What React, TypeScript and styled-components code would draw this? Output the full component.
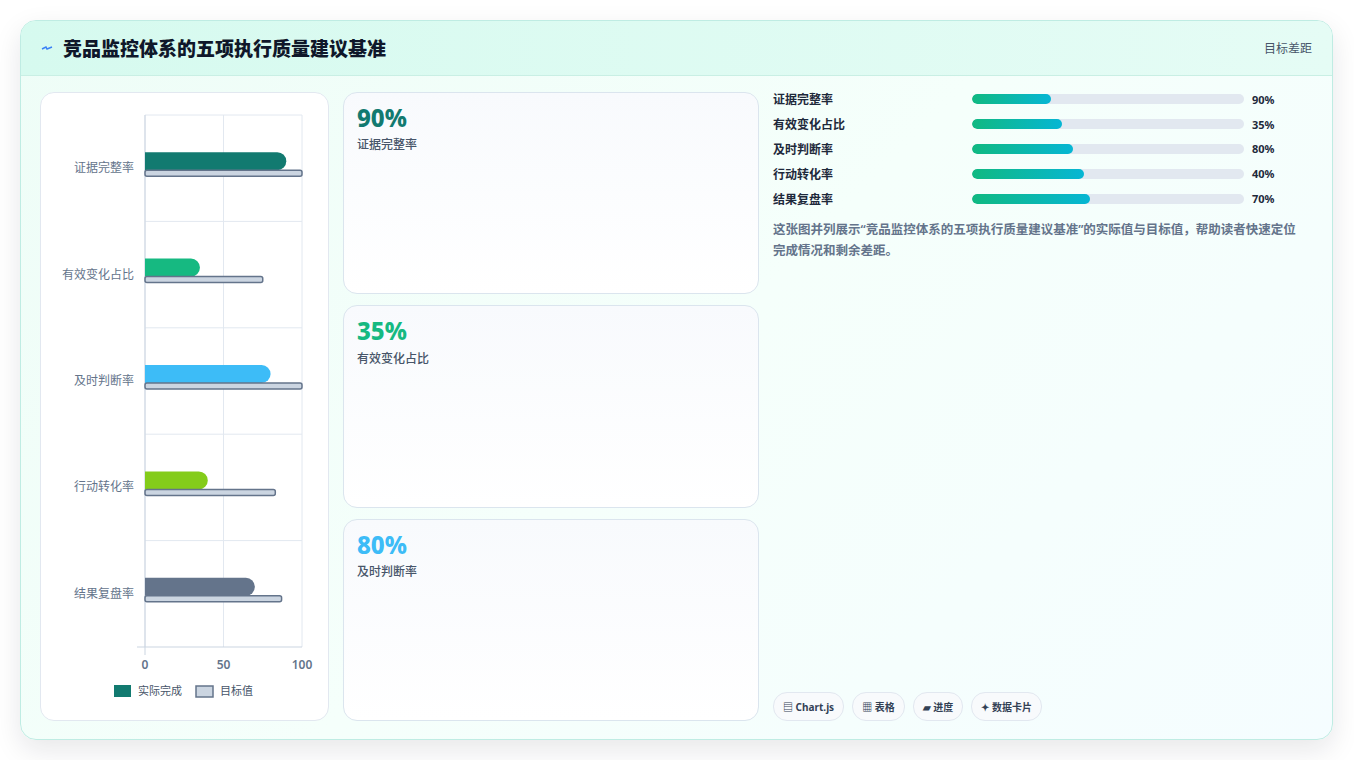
import styled, { createGlobalStyle } from "styled-components";

const Global = createGlobalStyle`
  html, body { margin: 0; padding: 0; background: #fff; }
  body { font-family: "Noto Sans", "Noto Sans CJK SC", sans-serif; }
`;

const data = [
  { name: "证据完整率", actual: 90, target: 100, color: "#127a70", fill: 79 },
  { name: "有效变化占比", actual: 35, target: 75, color: "#16b981", fill: 90 },
  { name: "及时判断率", actual: 80, target: 100, color: "#3dbcf7", fill: 101 },
  { name: "行动转化率", actual: 40, target: 83, color: "#84cc1a", fill: 112 },
  { name: "结果复盘率", actual: 70, target: 87, color: "#64748b", fill: 118 },
];

const Page = styled.div`
  padding: 20px 21px 20px 20px;
  height: 760px;
  box-sizing: border-box;
`;

const Card = styled.div`
  height: 720px;
  box-sizing: border-box;
  border: 1px solid #bfece3;
  border-radius: 16px;
  background: linear-gradient(135deg, #eefdf7 0%, #f5fffb 50%, #f5fdff 100%);
  box-shadow: 0 10px 28px rgba(15, 23, 42, 0.1);
  display: flex;
  flex-direction: column;
  overflow: hidden;
`;

const Header = styled.div`
  height: 55px;
  flex: none;
  box-sizing: border-box;
  display: flex;
  align-items: center;
  justify-content: space-between;
  padding: 0 20px 0 20px;
  background: linear-gradient(90deg, #d6faef, #e5fcf5);
  border-bottom: 1px solid #c9efe4;
`;

const Title = styled.h1`
  margin: 0;
  font-size: 19px;
  font-weight: 800;
  color: #0f172a;
  display: flex;
  align-items: center;
  gap: 10px;
`;

const HeaderNote = styled.span`
  font-size: 12px;
  color: #475569;
`;

const Body = styled.div`
  flex: 1;
  display: grid;
  grid-template-columns: 289px 416px 1fr;
  gap: 14px;
  padding: 16px 20px 18px 19px;
  min-height: 0;
`;

const Panel = styled.div`
  background: #fff;
  border: 1px solid #e2e8f0;
  border-radius: 14px;
  overflow: hidden;
`;

const Stats = styled.div`
  display: grid;
  grid-template-rows: repeat(3, 1fr);
  gap: 11px;
  min-height: 0;
`;

const StatCard = styled.div`
  border: 1px solid #dbe5ee;
  border-radius: 14px;
  background: linear-gradient(180deg, #f8fafd, #ffffff);
  padding: 12px 13px;
`;

const StatValue = styled.div<{ $color: string }>`
  font-size: 24px;
  font-weight: 800;
  color: ${(p) => p.$color};
  line-height: 1.1;
`;

const StatLabel = styled.div`
  font-size: 12px;
  color: #475569;
  margin-top: 4px;
  font-weight: 500;
`;

const Side = styled.div`
  display: flex;
  flex-direction: column;
  margin-top: -5px;
  min-height: 0;
`;

const Row = styled.div`
  display: grid;
  grid-template-columns: 199px 272px 1fr;
  align-items: center;
  height: 24.8px;
  font-size: 12px;
  font-weight: 700;
  color: #1e293b;
`;

const Track = styled.div`
  height: 10px;
  background: #e2e8f0;
  border-radius: 5px;
  overflow: hidden;
`;

const Fill = styled.div`
  height: 100%;
  border-radius: 5px;
  background: linear-gradient(90deg, #10b981, #06b6d4);
`;

const Pct = styled.span`
  padding-left: 8px;
  font-size: 11px;
`;

const Desc = styled.p`
  margin: 8px 8px 0 0;
  font-size: 12.5px;
  line-height: 21px;
  color: #64748b;
  font-weight: 600;
`;

const Chips = styled.div`
  margin-top: auto;
  display: flex;
  gap: 8px;
`;

const Chip = styled.span`
  font-size: 10px;
  font-weight: 700;
  color: #334155;
  border: 1px solid #e2e8f0;
  background: #f8fafc;
  border-radius: 14px;
  padding: 6px 9px;
`;

const Chart = () => {
  const x0 = 104, w = 157, top = 22, band = 106.4;
  const sx = (v: number) => x0 + (v / 100) * w;
  return (
    <svg width="289" height="625" viewBox="0 0 289 625" fontFamily="Noto Sans, Noto Sans CJK SC, sans-serif">
      {[0, 50, 100].map((v) => (
        <line key={v} x1={sx(v)} x2={sx(v)} y1={top} y2={554} stroke="#e2e8f0" />
      ))}
      {[1, 2, 3, 4].map((i) => (
        <line key={i} x1={x0} x2={x0 + w} y1={top + band * i} y2={top + band * i} stroke="#e2e8f0" />
      ))}
      <line x1={x0} x2={x0 + w} y1={top} y2={top} stroke="#e2e8f0" />
      <line x1={x0 - 8} x2={x0 + w} y1={554} y2={554} stroke="#cbd5e1" />
      <line x1={x0} x2={x0} y1={top} y2={562} stroke="#cbd5e1" />
      {data.map((d, i) => {
        const c = top + band * i + band / 2;
        const aw = sx(d.actual) - x0;
        return (
          <g key={d.name}>
            <text x={93} y={c + 4} textAnchor="end" fontSize="12" fill="#64748b">{d.name}</text>
            <path d={`M${x0} ${c - 16} H${x0 + aw - 9} A9 9 0 0 1 ${x0 + aw} ${c - 7} A9 9 0 0 1 ${x0 + aw - 9} ${c + 2} H${x0} Z`} fill={d.color} />
            <rect x={x0} y={c + 2} width={sx(d.target) - x0} height={6} rx={2} fill="#cbd5e1" stroke="#64748b" strokeWidth="1.5" />
          </g>
        );
      })}
      {[0, 50, 100].map((v) => (
        <text key={v} x={sx(v)} y={576} textAnchor="middle" fontSize="12" fontWeight="600" fill="#64748b">{v}</text>
      ))}
      <rect x={73} y={592} width={17} height={12} fill="#127a70" />
      <text x={97} y={602} fontSize="11" fill="#475569">实际完成</text>
      <rect x={155} y={593} width={17} height={11} fill="#cbd5e1" stroke="#64748b" strokeWidth="1.5" />
      <text x={179} y={602} fontSize="11" fill="#475569">目标值</text>
    </svg>
  );
};

export default function App() {
  return (
    <Page>
      <Global />
      <Card>
        <Header>
          <Title>
            <svg width="12" height="8" viewBox="0 0 12 8"><path d="M1 5 L5 3 L6 5 L11 3" stroke="#3b82f6" strokeWidth="1.4" fill="none" /></svg>
            竞品监控体系的五项执行质量建议基准
          </Title>
          <HeaderNote>目标差距</HeaderNote>
        </Header>
        <Body>
          <Panel><Chart /></Panel>
          <Stats>
            {data.slice(0, 3).map((d) => (
              <StatCard key={d.name}>
                <StatValue $color={d.color}>{d.actual}%</StatValue>
                <StatLabel>{d.name}</StatLabel>
              </StatCard>
            ))}
          </Stats>
          <Side>
            {data.map((d) => (
              <Row key={d.name}>
                <span>{d.name}</span>
                <Track><Fill style={{ width: `${(d.fill / 272) * 100}%` }} /></Track>
                <Pct>{d.actual}%</Pct>
              </Row>
            ))}
            <Desc>这张图并列展示“竞品监控体系的五项执行质量建议基准”的实际值与目标值，帮助读者快速定位完成情况和剩余差距。</Desc>
            <Chips>
              <Chip>▤ Chart.js</Chip>
              <Chip>▦ 表格</Chip>
              <Chip>▰ 进度</Chip>
              <Chip>✦ 数据卡片</Chip>
            </Chips>
          </Side>
        </Body>
      </Card>
    </Page>
  );
}
